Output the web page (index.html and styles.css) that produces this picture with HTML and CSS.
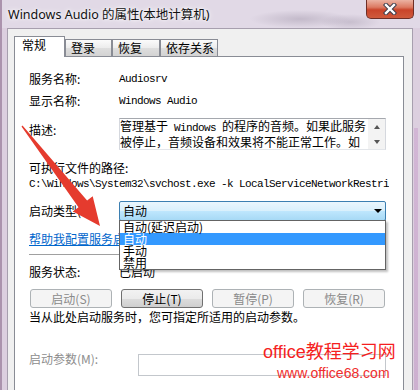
FILE: index.html
```html
<!DOCTYPE html>
<html>
    <head>
        <meta charset="utf-8">
        <link rel="stylesheet" href="styles.css">
    </head>
    <body>
        <div class="window">
            <div class="titlebar">
                <span class="title">Windows Audio 的属性(本地计算机)</span>
                <div class="close">
                    <svg width="14" height="12" viewBox="0 0 14 12">
                        <path d="M3 2 L11 10 M11 2 L3 10" stroke="#3b3b4a" stroke-width="4.4" stroke-linecap="square"/>
                        <path d="M3 2 L11 10 M11 2 L3 10" stroke="#fff" stroke-width="2.4" stroke-linecap="square"/>
                    </svg>
                </div>
            </div>
            <div class="dialog">
                <ul class="tabs">
                    <li class="tab active tab-general">常规</li>
                    <li class="tab tab-logon">登录</li>
                    <li class="tab tab-recovery">恢复</li>
                    <li class="tab tab-deps">依存关系</li>
                </ul>
                <div class="panel">
                    <div class="row">
                        <span class="label">服务名称:</span>
                        <span class="mono">Audiosrv</span>
                    </div>
                    <div class="row">
                        <span class="label">显示名称:</span>
                        <span class="mono">Windows Audio</span>
                    </div>
                    <div class="row desc-row">
                        <span class="label">描述:</span>
                        <div class="desc">
                            <div class="desc-text">管理基于<span class="mono"> Windows </span>的程序的音频。如果此服务<br>被停止，音频设备和效果将不能正常工作。如</div>
                            <div class="vscroll"><span class="arr-up"></span><span class="arr-down"></span></div>
                        </div>
                    </div>
                    <div class="path-label">可执行文件的路径:</div>
                    <div class="path mono">C:\Windows\System32\svchost.exe -k LocalServiceNetworkRestricted</div>
                    <div class="row start-row">
                        <span class="label">启动类型(E):</span>
                        <div class="combo">
                            <span>自动</span>
                            <span class="caret"></span>
                            <ul class="dropdown">
                                <li>自动(延迟启动)</li>
                                <li class="hl">自动</li>
                                <li>手动</li>
                                <li>禁用</li>
                            </ul>
                        </div>
                    </div>
                    <a class="help" href="#">帮助我配置服务启动选项。</a>
                    <div class="sep"></div>
                    <div class="row status-row">
                        <span class="label">服务状态:</span>
                        <span>已启动</span>
                    </div>
                    <div class="buttons">
                        <span class="btn disabled">启动(S)</span>
                        <span class="btn">停止(T)</span>
                        <span class="btn disabled">暂停(P)</span>
                        <span class="btn disabled">恢复(R)</span>
                    </div>
                    <p class="note">当从此处启动服务时，您可指定所适用的启动参数。</p>
                    <div class="row param-row">
                        <span class="label gray">启动参数(M):</span>
                        <span class="input"></span>
                    </div>
                </div>
            </div>
            <div class="watermark">
                <div class="wm-big">office教程学习网</div>
                <div class="wm-small">www.office68.com</div>
            </div>
            <svg class="arrow" width="420" height="390" viewBox="0 0 420 390">
                <polygon points="22.5,125.6 87.1,200.5 92.7,196.2 100,226 72.9,211.6 78.5,207.3 21.5,126.4" fill="#e53b2e"/>
            </svg>
        </div>
    </body>
</html>
```

FILE: styles.css
```css
*, *:after, *:before {
    box-sizing: border-box;
    margin: 0;
    padding: 0;
}
body {
    width: 420px;
    height: 390px;
    overflow: hidden;
    font-family: "Noto Sans CJK SC", sans-serif;
    font-size: 12px;
    color: #000;
}
.window {
    position: relative;
    height: 390px;
    display: flex;
    flex-direction: column;
    background:
        linear-gradient(#d2b6d5, #cdb0d0) right 2px top 128px / 4px 262px no-repeat,
        linear-gradient(to right, #ab93ad 0, #ab93ad 2px, #dccfdf 2px, #dccfdf 100%);
}
.titlebar {
    height: 28px;
    flex: none;
    display: flex;
    justify-content: space-between;
    align-items: flex-start;
    padding: 0 6px 0 8px;
    background:
        radial-gradient(ellipse 50px 9px at 300px 19px, rgba(140,128,150,0.35), transparent),
        radial-gradient(ellipse 30px 8px at 350px 22px, rgba(140,128,150,0.3), transparent),
        linear-gradient(to right, #ab93ad 0, #ab93ad 2px, #e1d9e6 2px, #e1d9e6 100%);
}
.title {
    font-family: "Noto Sans", "Noto Sans CJK SC", sans-serif;
    font-size: 12.5px;
    line-height: 30px;
    color: #111;
    text-shadow: 0 0 6px #fff, 0 0 3px #fff;
}
.close {
    width: 48px;
    height: 19px;
    border: 1px solid #6e2e26;
    border-top: none;
    border-radius: 0 0 5px 5px;
    background: linear-gradient(#ebb2a2, #dc7a62 40%, #c9442a 55%, #cf5a3c);
    display: flex;
    align-items: center;
    justify-content: center;
}
.dialog {
    flex: 1;
    display: flex;
    flex-direction: column;
    margin: 0 7px;
    border: 1px solid #a79fae;
    border-bottom: none;
    background: #f0f0f0;
    padding: 7px 8px 0 6px;
}
.tabs {
    display: flex;
    align-items: flex-start;
    list-style: none;
    height: 21px;
    flex: none;
}
.tab {
    height: 17px;
    margin-top: 3px;
    border: 1px solid #898c95;
    border-bottom: none;
    background: linear-gradient(#fbfbfb, #ececec 50%, #dedede 50%, #d3d3d3);
    padding-left: 5px;
    line-height: 16px;
}
.tab.active {
    height: 21px;
    margin-top: 0;
    background: #fff;
    padding-left: 7px;
    position: relative;
    z-index: 1;
}
.tab-general {
    width: 51px;
}
.tab-logon {
    width: 47px;
}
.tab-recovery {
    width: 48px;
}
.tab-deps {
    width: 58px;
}
.panel {
    flex: 1;
    margin-top: -1px;
    border: 1px solid #898c95;
    border-bottom: none;
    background: #fff;
    padding: 11px 0 0 14px;
}
.row {
    display: flex;
    line-height: 22px;
}
.label {
    width: 90px;
    flex: none;
}
.mono {
    font-family: "Liberation Mono", monospace;
    font-size: 11px;
    letter-spacing: -0.6px;
}
.desc-row {
    margin-top: 6px;
    line-height: 16px;
}
.desc-row .label {
    padding-top: 4px;
}
.desc {
    width: 267px;
    height: 32px;
    display: flex;
    border: 1px solid;
    border-color: #a5a8ae #d5d8de #e3e6ea #d5d8de;
}
.desc-text {
    flex: 1;
    line-height: 13px;
    white-space: nowrap;
    overflow: hidden;
}
.vscroll {
    width: 17px;
    background: #f3f3f3;
    display: flex;
    flex-direction: column;
    align-items: center;
    justify-content: space-around;
}
.arr-up, .arr-down {
    width: 0;
    height: 0;
    border-left: 3.5px solid transparent;
    border-right: 3.5px solid transparent;
}
.arr-up {
    border-bottom: 4px solid #555;
}
.arr-down {
    border-top: 4px solid #555;
}
.path-label {
    margin-top: 10px;
    line-height: 16px;
}
.path {
    width: 360px;
    line-height: 16px;
    white-space: nowrap;
    overflow: hidden;
}
.start-row {
    margin-top: 8px;
    align-items: center;
}
.combo {
    position: relative;
    width: 267px;
    height: 20px;
    border: 1px solid #3c7fb1;
    border-radius: 2px;
    background: linear-gradient(#eaf6fd, #d9f0fc 48%, #bee6fd 52%, #a7d9f5);
    display: flex;
    align-items: center;
    justify-content: space-between;
    padding: 0 3px 0 3px;
    line-height: 18px;
}
.caret {
    width: 0;
    height: 0;
    border-top: 4px solid #000;
    border-left: 4px solid transparent;
    border-right: 4px solid transparent;
}
.dropdown {
    position: absolute;
    top: 18px;
    left: -1px;
    width: 267px;
    border: 1px solid #646464;
    background: #fff;
    list-style: none;
    z-index: 5;
    box-shadow: 2px 2px 2px rgba(0,0,0,0.25);
}
.dropdown li {
    height: 12px;
    line-height: 12px;
    padding-left: 3px;
}
.dropdown li.hl {
    background: #3399ff;
    color: #fff;
}
.help {
    display: block;
    width: fit-content;
    margin-top: 9px;
    line-height: 16px;
    color: #0066cc;
    text-decoration: underline;
}
.sep {
    margin-top: 7px;
    width: 356px;
    border-top: 1px solid #a0a0a0;
}
.status-row {
    margin-top: 9px;
    line-height: 16px;
}
.buttons {
    display: flex;
    justify-content: space-between;
    width: 355px;
    margin: 9px 0 0 1px;
}
.btn {
    width: 82px;
    height: 19px;
    border: 1px solid #707070;
    border-radius: 3px;
    background: linear-gradient(#f2f2f2, #ebebeb 50%, #dddddd 50%, #cfcfcf);
    line-height: 17px;
    text-align: center;
}
.btn.disabled {
    border-color: #adb2b5;
    background: #f4f4f4;
    color: #8a8a8a;
}
.note {
    margin-top: 1px;
    line-height: 16px;
}
.param-row {
    margin-top: 26px;
    line-height: 16px;
    align-items: flex-start;
}
.param-row .label {
    width: 109px;
}
.gray {
    color: #8d8d8d;
}
.input {
    margin-top: 3px;
    width: 248px;
    height: 22px;
    border: 1px solid #c3c7cc;
    background: #fff;
}
.watermark {
    position: absolute;
    left: 263px;
    top: 341px;
    z-index: 10;
    font-family: "Liberation Sans", "Noto Sans CJK SC", sans-serif;
}
.wm-big {
    font-size: 18px;
    line-height: 22px;
    color: #f51f1f;
}
.wm-small {
    margin: 2px 0 0 14px;
    font-size: 14px;
    line-height: 16px;
    color: #ef2d2d;
}
.arrow {
    position: absolute;
    left: 0;
    top: 0;
    z-index: 8;
    pointer-events: none;
}
```
